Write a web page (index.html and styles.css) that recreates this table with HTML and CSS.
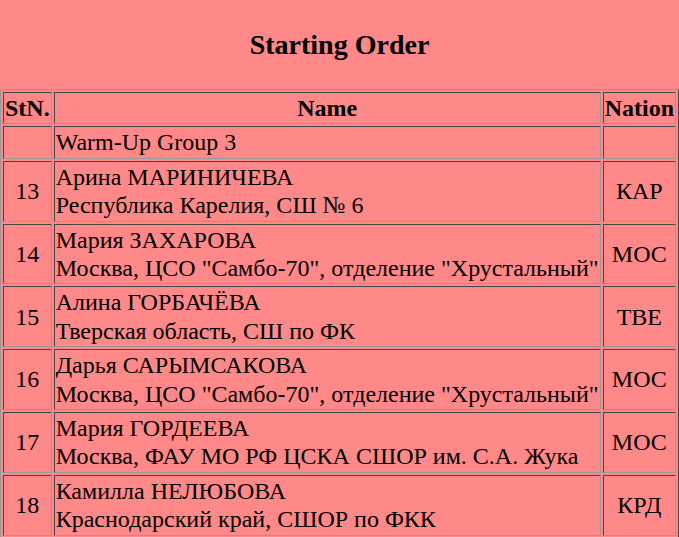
FILE: index.html
```html
<!DOCTYPE html>
<html>
<head>
<meta charset="utf-8">
<title>Starting Order</title>
<link rel="stylesheet" href="styles.css">
</head>
<body>
<h1 class="title">Starting Order</h1>
<table class="order">
<tr><th>StN.</th><th>Name</th><th>Nation</th></tr>
<tr><td class="num"></td><td class="name">Warm-Up Group 3</td><td class="nat"></td></tr>
<tr><td class="num">13</td><td class="name">Арина МАРИНИЧЕВА<br>Республика Карелия, СШ № 6</td><td class="nat">КАР</td></tr>
<tr><td class="num">14</td><td class="name">Мария ЗАХАРОВА<br>Москва, ЦСО "Самбо-70", отделение "Хрустальный"</td><td class="nat">МОС</td></tr>
<tr><td class="num">15</td><td class="name">Алина ГОРБАЧЁВА<br>Тверская область, СШ по ФК</td><td class="nat">ТВЕ</td></tr>
<tr><td class="num">16</td><td class="name">Дарья САРЫМСАКОВА<br>Москва, ЦСО "Самбо-70", отделение "Хрустальный"</td><td class="nat">МОС</td></tr>
<tr><td class="num">17</td><td class="name">Мария ГОРДЕЕВА<br>Москва, ФАУ МО РФ ЦСКА СШОР им. С.А. Жука</td><td class="nat">МОС</td></tr>
<tr><td class="num">18</td><td class="name">Камилла НЕЛЮБОВА<br>Краснодарский край, СШОР по ФКК</td><td class="nat">КРД</td></tr>
<tr class="next"><td class="num"></td><td class="name"></td><td class="nat"></td></tr>
</table>
</body>
</html>
```
FILE: styles.css
```css
html, body {
  margin: 0;
  padding: 0;
  background: #ff8888;
  color: #000;
  font-family: "Liberation Serif", "Times New Roman", serif;
}
.title {
  font-size: 28px;
  line-height: 32px;
  font-weight: bold;
  text-align: center;
  margin: 29px 0 28px;
}
.order {
  margin: 0 auto;
  border: 1px outset #9a9a9a;
  border-collapse: separate;
  border-spacing: 2px;
  font-size: 24px;
  line-height: 28.4px;
  white-space: nowrap;
}
.order th, .order td {
  border: 1px inset #9a9a9a;
  padding: 1px;
}
.order th {
  font-weight: bold;
  text-align: center;
}
.order .num, .order .nat {
  text-align: center;
}
.order .name {
  text-align: left;
}
.order .next td {
  height: 56px;
}
```
